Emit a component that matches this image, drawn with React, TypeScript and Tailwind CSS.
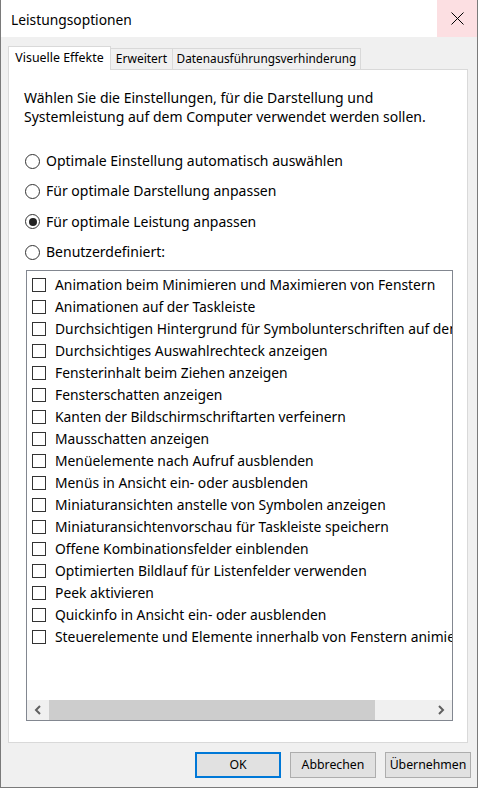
import React from "react";

const items = [
  "Animation beim Minimieren und Maximieren von Fenstern",
  "Animationen auf der Taskleiste",
  "Durchsichtigen Hintergrund für Symbolunterschriften auf dem Desktop",
  "Durchsichtiges Auswahlrechteck anzeigen",
  "Fensterinhalt beim Ziehen anzeigen",
  "Fensterschatten anzeigen",
  "Kanten der Bildschirmschriftarten verfeinern",
  "Mausschatten anzeigen",
  "Menüelemente nach Aufruf ausblenden",
  "Menüs in Ansicht ein- oder ausblenden",
  "Miniaturansichten anstelle von Symbolen anzeigen",
  "Miniaturansichtenvorschau für Taskleiste speichern",
  "Offene Kombinationsfelder einblenden",
  "Optimierten Bildlauf für Listenfelder verwenden",
  "Peek aktivieren",
  "Quickinfo in Ansicht ein- oder ausblenden",
  "Steuerelemente und Elemente innerhalb von Fenstern animieren",
];

const radios = [
  { label: "Optimale Einstellung automatisch auswählen", checked: false },
  { label: "Für optimale Darstellung anpassen", checked: false },
  { label: "Für optimale Leistung anpassen", checked: true },
  { label: "Benutzerdefiniert:", checked: false },
];

export default function App() {
  return (
    <div className="w-[478px] h-[788px] bg-[#f0f0f0] flex flex-col border-l border-r border-b border-[#7a7a7a] font-['Noto_Sans',sans-serif] text-black text-[14px] overflow-hidden">
      {/* Title bar */}
      <div className="h-[37px] shrink-0 bg-white flex items-center justify-between">
        <div className="pl-[10px] pt-[3px] text-[13.8px] leading-none">Leistungsoptionen</div>
        <div className="w-[40px] h-[37px] bg-[#fcdfe2] flex items-center justify-center">
          <svg width="13" height="13" viewBox="0 0 13 13">
            <path d="M0.5 0.5 L12.5 12.5 M12.5 0.5 L0.5 12.5" stroke="#000" strokeWidth="1" fill="none" />
          </svg>
        </div>
      </div>

      {/* Tabs */}
      <div className="mt-[9px] h-[23px] shrink-0 pl-[7px] flex items-end">
        <div className="relative z-10 -mb-px h-[24px] w-[103px] bg-white border border-b-0 border-[#d9d9d9] flex items-center justify-center leading-none text-[12.4px]">
          Visuelle Effekte
        </div>
        <div className="-ml-px h-[21px] w-[63px] bg-[#f0f0f0] border border-b-0 border-[#d9d9d9] flex items-center justify-center leading-none text-[12px]">
          Erweitert
        </div>
        <div className="-ml-px h-[21px] w-[189px] bg-[#f0f0f0] border border-b-0 border-[#d9d9d9] flex items-center justify-center leading-none text-[11.8px]">
          Datenausführungsverhinderung
        </div>
      </div>

      {/* Panel */}
      <div className="ml-[7px] mr-[9px] h-[674px] shrink-0 bg-white border border-[#d9d9d9] flex flex-col">
        <div className="pl-[15px] pt-[18px] leading-[19px] text-[14px]">
          <div>Wählen Sie die Einstellungen, für die Darstellung und</div>
          <div>Systemleistung auf dem Computer verwendet werden sollen.</div>
        </div>

        <div className="mt-[20px] flex flex-col">
          {radios.map((r) => (
            <div key={r.label} className="h-[30.3px] flex items-center pl-[16px]">
              <div className="w-[15px] h-[15px] rounded-full border border-[#333] bg-white flex items-center justify-center">
                {r.checked && <div className="w-[8px] h-[8px] rounded-full bg-[#222]" />}
              </div>
              <span className="ml-[6px] leading-none">{r.label}</span>
            </div>
          ))}
        </div>

        {/* List */}
        <div className="ml-[17px] mt-[3px] w-[427px] h-[451px] border border-[#828790] bg-white flex flex-col">
          <div className="flex-1 overflow-hidden pt-[3px]">
            {items.map((t) => (
              <div key={t} className="h-[22px] flex items-center pl-[5px] whitespace-nowrap">
                <div className="w-[14px] h-[14px] shrink-0 border border-[#333] bg-white" />
                <span className="ml-[9px] leading-none text-[13.85px]">{t}</span>
              </div>
            ))}
          </div>
          <div className="h-[20px] shrink-0 flex bg-[#f0f0f0]">
            <div className="w-[22px] h-full flex items-center justify-center">
              <svg width="8" height="10" viewBox="0 0 8 10">
                <path d="M6 1 L2 5 L6 9" stroke="#606060" strokeWidth="2" fill="none" />
              </svg>
            </div>
            <div className="w-[326px] h-full bg-[#cdcdcd]" />
            <div className="flex-1" />
            <div className="w-[22px] h-full flex items-center justify-center">
              <svg width="8" height="10" viewBox="0 0 8 10">
                <path d="M2 1 L6 5 L2 9" stroke="#606060" strokeWidth="2" fill="none" />
              </svg>
            </div>
          </div>
        </div>
      </div>

      {/* Buttons */}
      <div className="mt-[9px] h-[26px] shrink-0 flex justify-end gap-[9px] pr-[6px]">
        <button className="w-[86px] h-[26px] bg-[#e1e1e1] border-2 border-[#0078d7] leading-none text-[12.3px]">OK</button>
        <button className="w-[86px] h-[26px] bg-[#e1e1e1] border border-[#adadad] leading-none text-[12.3px]">Abbrechen</button>
        <button className="w-[86px] h-[26px] bg-[#e1e1e1] border border-[#adadad] leading-none text-[12.3px]">Übernehmen</button>
      </div>
    </div>
  );
}
